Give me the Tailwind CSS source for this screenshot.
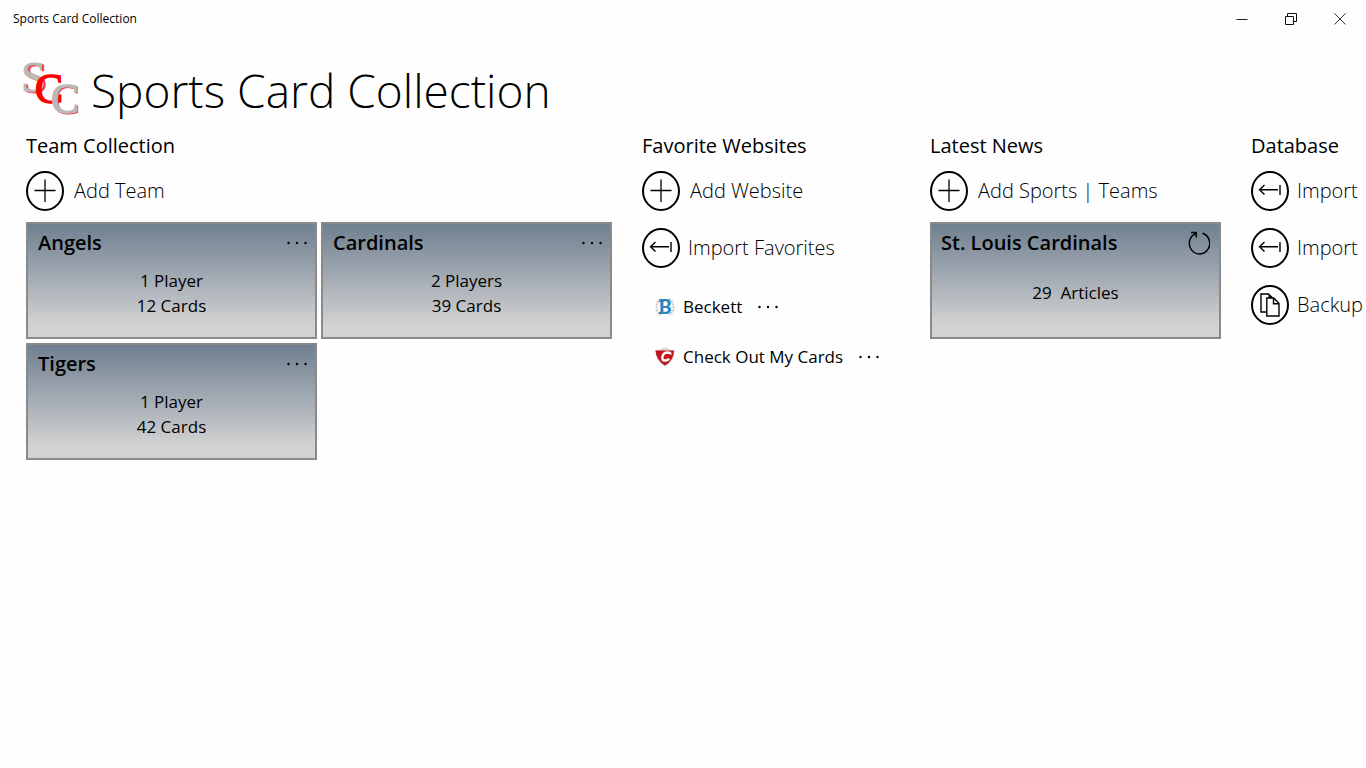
<!DOCTYPE html>
<html lang="en">
<head>
    <meta charset="UTF-8">
    <meta name="viewport" content="width=device-width, initial-scale=1.0">
    <title>Sports Card Collection</title>
    <script src="https://cdn.jsdelivr.net/npm/@tailwindcss/browser@4"></script>
</head>
<body class="min-h-screen overflow-x-hidden bg-[#fefefe] font-['Open_Sans',sans-serif] text-black">

    <!-- Shared icons -->
    <svg class="hidden">
        <symbol id="icon-add" viewBox="0 0 38 40">
            <ellipse cx="19" cy="20" rx="18" ry="19" fill="none" stroke="currentColor" stroke-width="2"/>
            <path d="M8.500 19.500h21M19 8.500v22.500" fill="none" stroke="currentColor" stroke-width="1.300"/>
        </symbol>
        <symbol id="icon-import" viewBox="0 0 38 40">
            <ellipse cx="19" cy="20" rx="18" ry="19" fill="none" stroke="currentColor" stroke-width="2"/>
            <path d="M9 18.800h18M13.500 14l-5 4.800 5 4.800M29 14v10" fill="none" stroke="currentColor" stroke-width="1.400"/>
        </symbol>
        <symbol id="icon-copy" viewBox="0 0 38 40">
            <ellipse cx="19" cy="20" rx="18" ry="19" fill="none" stroke="currentColor" stroke-width="2"/>
            <path d="M15.500 27H10V9h7.500l4 4M15.800 13h7l5.200 5.500V31H15.800zM22.500 13v5.800H28" fill="none" stroke="currentColor" stroke-width="1.400"/>
            <path d="M17.500 9l4 4h-4z"/>
        </symbol>
        <symbol id="icon-more" viewBox="0 0 20 4">
            <circle cx="1.500" cy="2" r="1.200"/>
            <circle cx="10" cy="2" r="1.200"/>
            <circle cx="18.500" cy="2" r="1.200"/>
        </symbol>
    </svg>

    <!-- Title bar -->
    <div class="flex h-[37px] items-center justify-between pr-0.5 pl-[13px]">
        <span class="text-[12px]">Sports Card Collection</span>
        <div class="flex">
            <button type="button" aria-label="Minimize" class="flex h-9 w-[49px] items-center justify-center">
                <svg class="h-3 w-3" viewBox="0 0 12 12" fill="none" stroke="#222"><path d="M.5 6.500h11"/></svg>
            </button>
            <button type="button" aria-label="Restore" class="flex h-9 w-[49px] items-center justify-center">
                <svg class="h-3 w-3" viewBox="0 0 12 12" fill="none" stroke="#111"><path d="M.5 3.500h8v8h-8zM2.500 3V.5h9v8H9"/></svg>
            </button>
            <button type="button" aria-label="Close" class="flex h-9 w-[49px] items-center justify-center">
                <svg class="h-3 w-3" viewBox="0 0 12 12" fill="none" stroke="#333"><path d="M.5.5l11 11M11.500.5l-11 11"/></svg>
            </button>
        </div>
    </div>

    <!-- Logo and app name -->
    <header class="flex h-[94px] items-center pt-3 pl-[23px]">
        <svg class="h-[60px] w-[56px] shrink-0 overflow-visible" viewBox="0 0 56 60" font-family="Liberation Serif, serif" aria-hidden="true">
            <g stroke-width=".8">
                <text x="0" y="33" font-size="45" fill="#f33" stroke="#f33">S</text>
                <text x="-2" y="32" font-size="45" fill="#b9b9b9" stroke="#b9b9b9">S</text>
                <text x="12" y="43" font-size="42" fill="#f00" stroke="#f00" stroke-width="1.600">C</text>
                <text x="29" y="54" font-size="42" fill="#f33" stroke="#f33">C</text>
                <text x="28" y="53" font-size="42" fill="#b9b9b9" stroke="#b9b9b9" stroke-width="1.400">C</text>
            </g>
        </svg>
        <h1 class="ml-3 text-[46px] leading-[60px] font-light whitespace-nowrap">Sports Card Collection</h1>
    </header>

    <main class="flex gap-[30px] pl-[26px] whitespace-nowrap">

        <!-- Team collection -->
        <section class="w-[586px] shrink-0">
            <h2 class="mb-[10px] text-[20px] leading-[30px]">Team Collection</h2>
            <button type="button" class="flex h-10 items-center gap-[10px] text-[20px] font-light">
                <svg class="h-10 w-[38px]"><use href="#icon-add"/></svg>Add Team
            </button>
            <div class="mt-[11px] grid grid-cols-2 gap-1">
                <article class="h-[117px] border-2 border-[#8a8a8a] bg-linear-to-b from-[#708090] to-[#d3d3d3] to-90% px-[10px] pt-1">
                    <div class="flex items-center justify-between">
                        <h3 class="text-[20px] leading-[30px] font-semibold">Angels</h3>
                        <button type="button" aria-label="More options for Angels" class="-mr-1 p-0.5"><svg class="h-1 w-5"><use href="#icon-more"/></svg></button>
                    </div>
                    <p class="mt-[10px] text-center text-[17px] leading-[25px]">1 Player<br>12 Cards</p>
                </article>
                <article class="h-[117px] border-2 border-[#8a8a8a] bg-linear-to-b from-[#708090] to-[#d3d3d3] to-90% px-[10px] pt-1">
                    <div class="flex items-center justify-between">
                        <h3 class="text-[20px] leading-[30px] font-semibold">Cardinals</h3>
                        <button type="button" aria-label="More options for Cardinals" class="-mr-1 p-0.5"><svg class="h-1 w-5"><use href="#icon-more"/></svg></button>
                    </div>
                    <p class="mt-[10px] text-center text-[17px] leading-[25px]">2 Players<br>39 Cards</p>
                </article>
                <article class="h-[117px] border-2 border-[#8a8a8a] bg-linear-to-b from-[#708090] to-[#d3d3d3] to-90% px-[10px] pt-1">
                    <div class="flex items-center justify-between">
                        <h3 class="text-[20px] leading-[30px] font-semibold">Tigers</h3>
                        <button type="button" aria-label="More options for Tigers" class="-mr-1 p-0.5"><svg class="h-1 w-5"><use href="#icon-more"/></svg></button>
                    </div>
                    <p class="mt-[10px] text-center text-[17px] leading-[25px]">1 Player<br>42 Cards</p>
                </article>
            </div>
        </section>

        <!-- Favorite websites -->
        <section class="w-[258px] shrink-0">
            <h2 class="mb-[10px] text-[20px] leading-[30px]">Favorite Websites</h2>
            <div class="flex flex-col items-start gap-[17px]">
                <button type="button" class="flex h-10 items-center gap-[10px] text-[20px] font-light">
                    <svg class="h-10 w-[38px]"><use href="#icon-add"/></svg>Add Website
                </button>
                <button type="button" class="flex h-10 items-center gap-2 text-[20px] font-light">
                    <svg class="h-10 w-[38px]"><use href="#icon-import"/></svg>Import Favorites
                </button>
            </div>
            <ul class="mt-[14px] pl-[13px] text-[17px]">
                <li class="flex h-[50px] items-center">
                    <svg class="mr-2 h-5 w-5" viewBox="0 0 20 20" aria-hidden="true">
                        <path d="M6 2C0 5 0 15 6 18M14 2c6 3 6 13 0 16" fill="none" stroke="#c4c4c4" stroke-width="2" stroke-dasharray="2 1"/>
                        <text x="4" y="17" font-family="Roboto, sans-serif" font-weight="bold" font-size="20" fill="#2c85bd">B</text>
                        <path d="M4 2.800h5v2H4zM4 15h5v2H4z" fill="#2c85bd"/>
                    </svg>
                    <a href="#">Beckett</a>
                    <button type="button" aria-label="More options for Beckett" class="ml-3 p-1"><svg class="h-1 w-5"><use href="#icon-more"/></svg></button>
                </li>
                <li class="flex h-[50px] items-center">
                    <svg class="mr-2 h-5 w-5" viewBox="0 0 20 20" aria-hidden="true">
                        <path d="M.5 3Q5 3 7 1.500q3-2 6 0Q15 3 19.500 3 20 14 10 19.800 0 14 .5 3z" fill="#d6d6d6"/>
                        <path d="M.5 3.500h18.500q0 9.500-9 15Q1 13 .5 3.500z" fill="#c4141c"/>
                        <path d="M15.500 7.500q0-2-3-2-4 0-5 4t2.500 4q3 0 4-2" fill="none" stroke="#fff" stroke-width="2.400"/>
                    </svg>
                    <a href="#">Check Out My Cards</a>
                    <button type="button" aria-label="More options for Check Out My Cards" class="ml-3 p-1"><svg class="h-1 w-5"><use href="#icon-more"/></svg></button>
                </li>
            </ul>
        </section>

        <!-- Latest news -->
        <section class="w-[291px] shrink-0">
            <h2 class="mb-[10px] text-[20px] leading-[30px]">Latest News</h2>
            <button type="button" class="flex h-10 items-center gap-[10px] text-[20px] font-light">
                <svg class="h-10 w-[38px]"><use href="#icon-add"/></svg>Add Sports | Teams
            </button>
            <article class="mt-[11px] h-[117px] border-2 border-[#8a8a8a] bg-linear-to-b from-[#708090] to-[#d3d3d3] to-90% px-[9px] pt-1">
                <div class="flex items-center justify-between">
                    <h3 class="text-[20px] leading-[30px] font-semibold">St. Louis Cardinals</h3>
                    <button type="button" aria-label="Refresh">
                        <svg class="h-6 w-[22px]" viewBox="0 0 22 24" fill="none" stroke="currentColor" stroke-width="1.500"><path d="M14.500 2.200A10.200 10.600 0 1 1 7.500 2.600M3 1.500h5.200v5"/></svg>
                    </button>
                </div>
                <p class="mt-[22px] text-center text-[17px] leading-[25px] whitespace-pre">29  Articles</p>
            </article>
        </section>

        <!-- Database -->
        <section class="shrink-0">
            <h2 class="mb-[10px] text-[20px] leading-[30px]">Database</h2>
            <div class="flex flex-col items-start gap-[17px]">
                <button type="button" class="flex h-10 items-center gap-2 text-[20px] font-light">
                    <svg class="h-10 w-[38px]"><use href="#icon-import"/></svg>Import
                </button>
                <button type="button" class="flex h-10 items-center gap-2 text-[20px] font-light">
                    <svg class="h-10 w-[38px]"><use href="#icon-import"/></svg>Import
                </button>
                <button type="button" class="flex h-10 items-center gap-2 text-[20px] font-light">
                    <svg class="h-10 w-[38px]"><use href="#icon-copy"/></svg>Backup
                </button>
            </div>
        </section>
    </main>

</body>
</html>
